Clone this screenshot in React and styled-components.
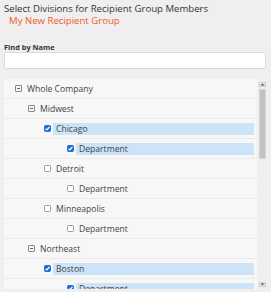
import React from 'react'
import styled, { createGlobalStyle } from 'styled-components'

const GlobalStyle = createGlobalStyle`
  html, body {
    margin: 0;
    padding: 0;
    background: #efefef;
    font-family: "Open Sans", "Liberation Sans", sans-serif;
  }
`

const rows = [
  { level: 0, kind: 'group', label: 'Whole Company' },
  { level: 1, kind: 'group', label: 'Midwest' },
  { level: 2, kind: 'check', checked: true, label: 'Chicago' },
  { level: 3, kind: 'check', checked: true, label: 'Department' },
  { level: 2, kind: 'check', checked: false, label: 'Detroit' },
  { level: 3, kind: 'check', checked: false, label: 'Department' },
  { level: 2, kind: 'check', checked: false, label: 'Minneapolis' },
  { level: 3, kind: 'check', checked: false, label: 'Department' },
  { level: 1, kind: 'group', label: 'Northeast' },
  { level: 2, kind: 'check', checked: true, label: 'Boston' },
  { level: 3, kind: 'check', checked: true, label: 'Department' },
]

const indents = [11, 24, 40, 63]

const App = () => {
  return (
    <>
      <GlobalStyle />
      <Page>
        <Title>Select Divisions for Recipient Group Members</Title>
        <GroupName>My New Recipient Group</GroupName>
        <Label>Find by Name</Label>
        <SearchInput type="text" />
        <Panel>
          <Tree>
            {rows.map((r, i) => (
              <Row key={i} $indent={indents[r.level]}>
                {r.kind === 'group' ? (
                  <>
                    <Expander />
                    <GroupText>{r.label}</GroupText>
                  </>
                ) : (
                  <>
                    <Check $checked={r.checked}>
                      {r.checked && (
                        <svg width="7" height="7" viewBox="0 0 7 7">
                          <path d="M1.6 3.6 L2.9 4.9 L5.4 2" stroke="#fff" strokeWidth="1.2" fill="none" />
                        </svg>
                      )}
                    </Check>
                    <ItemText $selected={r.checked}>{r.label}</ItemText>
                  </>
                )}
              </Row>
            ))}
          </Tree>
          <ScrollBar>
            <Arrow>
              <svg width="7" height="5" viewBox="0 0 7 5">
                <rect x="0.5" y="0.5" width="6" height="4" fill="#e8e8e8" stroke="#d0d0d0" />
                <path d="M1.5 3.5 L3.5 1.5 L5.5 3.5 Z" fill="#555" />
              </svg>
            </Arrow>
            <Thumb />
            <Track />
            <Arrow>
              <svg width="7" height="5" viewBox="0 0 7 5">
                <rect x="0.5" y="0.5" width="6" height="4" fill="#e8e8e8" stroke="#d0d0d0" />
                <path d="M1.5 1.5 L3.5 3.5 L5.5 1.5 Z" fill="#555" />
              </svg>
            </Arrow>
          </ScrollBar>
        </Panel>
      </Page>
    </>
  )
}

export default App

const Page = styled.div`
  height: 292px;
  padding: 3px 4px 0 4px;
  box-sizing: border-box;
  overflow: hidden;
`

const Title = styled.div`
  font-size: 9.6px;
  line-height: 12px;
  color: #333;
`

const GroupName = styled.div`
  font-size: 9.6px;
  line-height: 12px;
  color: #f05a28;
  padding-left: 5px;
`

const Label = styled.div`
  margin-top: 15px;
  font-size: 7.4px;
  font-weight: 700;
  line-height: 10px;
  color: #333;
`

const SearchInput = styled.input`
  display: block;
  box-sizing: border-box;
  width: 262px;
  height: 17px;
  margin: 0;
  border: 1px solid #dcdcdc;
  border-radius: 2px;
  background: #fff;
  outline: none;
`

const Panel = styled.div`
  margin-top: 10px;
  height: 210px;
  display: flex;
  overflow: hidden;
`

const Tree = styled.div`
  width: 253px;
  background: #f7f7f7;
`

const Row = styled.div`
  height: 20px;
  box-sizing: border-box;
  border-bottom: 1px solid #ebebeb;
  display: flex;
  align-items: center;
  padding-left: ${p => p.$indent}px;
  font-size: 8.6px;
  color: #444;
`

const Expander = styled.span`
  width: 7px;
  height: 7px;
  box-sizing: border-box;
  border: 1px solid #8a8a8a;
  border-radius: 1px;
  position: relative;
  margin-right: 5px;
  &::after {
    content: "";
    position: absolute;
    left: 1px;
    right: 1px;
    top: 2px;
    height: 1px;
    background: #666;
  }
`

const GroupText = styled.span`
  line-height: 12px;
`

const Check = styled.span`
  width: 7px;
  height: 7px;
  box-sizing: border-box;
  border-radius: 1.5px;
  display: flex;
  border: 1px solid ${p => (p.$checked ? '#1f6fd8' : '#9a9a9a')};
  background: ${p => (p.$checked ? '#1f6fd8' : '#fff')};
  margin-right: 2px;
  svg {
    margin: -1px;
  }
`

const ItemText = styled.span`
  flex: 1;
  margin-right: 3px;
  height: 12px;
  line-height: 12px;
  padding-left: 3px;
  background: ${p => (p.$selected ? '#cde3f8' : 'transparent')};
`

const ScrollBar = styled.div`
  width: 9px;
  margin-left: 1px;
  padding-top: 2px;
  display: flex;
  flex-direction: column;
  align-items: center;
`

const Arrow = styled.div`
  height: 6px;
  display: flex;
  align-items: center;
`

const Thumb = styled.div`
  margin-top: 2px;
  width: 7px;
  height: 70px;
  background: #c2c2c2;
  border: 1px solid #d6d6d6;
  box-sizing: border-box;
`

const Track = styled.div`
  flex: 0 0 122px;
`
